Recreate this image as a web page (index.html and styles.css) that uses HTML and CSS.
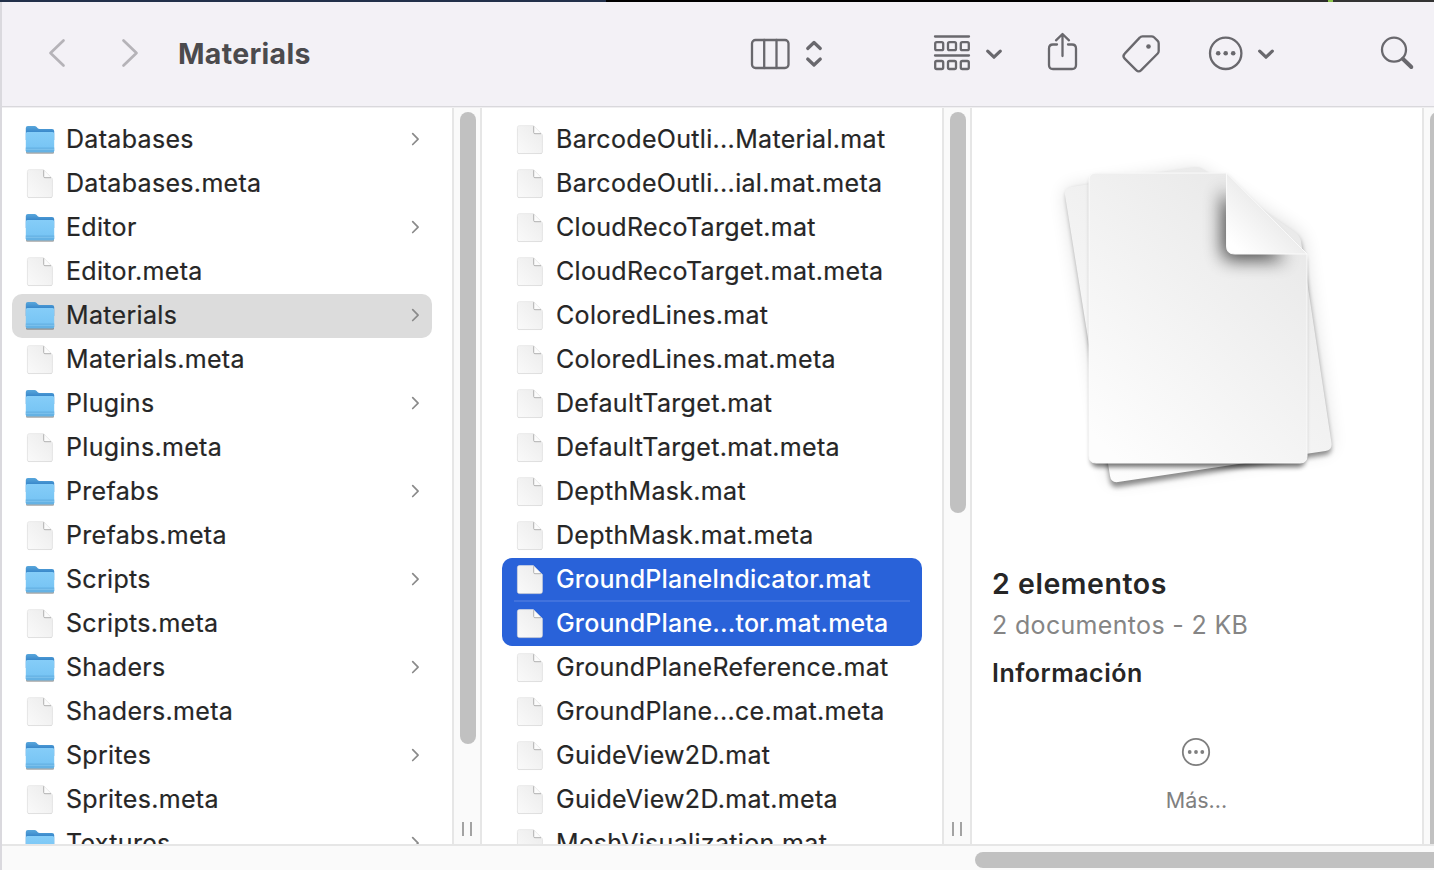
FILE: index.html
```html
<!DOCTYPE html>
<html lang="es">
<head>
<meta charset="utf-8">
<title>Materials</title>
<link rel="stylesheet" href="styles.css">
</head>
<body>
<svg class="defs" width="0" height="0">
  <defs>
    <linearGradient id="gFront" x1="0" y1="0" x2="0" y2="1"><stop offset="0" stop-color="#85cdf8"/><stop offset="1" stop-color="#74c2f3"/></linearGradient>
    <linearGradient id="gBack" x1="0" y1="0" x2="0" y2="1"><stop offset="0" stop-color="#59a7dc"/><stop offset="0.6" stop-color="#2d7cc4"/></linearGradient>
    <linearGradient id="gDoc" x1="1" y1="0" x2="0" y2="1"><stop offset="0" stop-color="#ebebeb"/><stop offset="1" stop-color="#fafafa"/></linearGradient>
    <linearGradient id="gPage" x1="0.8" y1="0.1" x2="0.15" y2="1"><stop offset="0" stop-color="#e9e9e9"/><stop offset="1" stop-color="#fdfdfd"/></linearGradient>
    <linearGradient id="gFold" x1="1" y1="0" x2="0" y2="1"><stop offset="0.45" stop-color="#ebebeb"/><stop offset="0.9" stop-color="#ffffff"/></linearGradient>
    <filter id="soft" x="-20%" y="-20%" width="140%" height="140%"><feGaussianBlur stdDeviation="9"/></filter>
    <filter id="tight" x="-20%" y="-20%" width="140%" height="140%"><feGaussianBlur stdDeviation="2.8"/></filter>
    <filter id="foldBlur" x="-50%" y="-50%" width="200%" height="200%"><feGaussianBlur stdDeviation="9"/></filter>
    <clipPath id="pageClip"><path d="M1096 173H1226L1307 254V456q0 7-7 7H1096q-7 0-7-7V180q0-7 7-7z"/></clipPath>
    <symbol id="folder" viewBox="0 0 32 44">
      <path d="M2 33.500h28v1.200q0 1-1.200 1H3.200q-1.200 0-1.200-1z" fill="#000" opacity=".35"/>
      <path d="M1.800 10q0-2 2-2h6.700q1.200 0 2.200 1l1 1.200q.8.800 2 .8H28q2.200 0 2.200 2v9H1.800z" fill="url(#gBack)"/>
      <path d="M1.800 15.500q0-1.500 1.500-1.500h25.400q1.500 0 1.500 1.500v17.200q0 1.500-1.500 1.500H3.300Q1.800 34.200 1.800 32.700z" fill="url(#gFront)"/>
      <path d="M1.800 29.500h28.400v3.200q0 1.500-1.500 1.500H3.300Q1.800 34.200 1.800 32.700z" fill="#65b2e4"/>
      <path d="M2 31.300h28" stroke="#80c4ee" stroke-width="1"/>
    </symbol>
    <symbol id="doc" viewBox="0 0 32 44">
      <path d="M5.400 9.200h14.500l8.500 8.500v16.300q0 2-2 2H5.400q-2 0-2-2V11.200q0-2 2-2z" fill="#000" opacity=".24"/>
      <path d="M5.400 7.600h14l9 9v17q0 2-2 2h-21q-2 0-2-2v-24q0-2 2-2z" fill="url(#gDoc)" stroke="#e2e2e2" stroke-width=".6"/>
      <path d="M19.700 8.200v6.300q0 1.200 1.200 1.200H27" fill="#fcfcfc" stroke="#b0b0b0" stroke-width="1"/>
    </symbol>
    <symbol id="arrow" viewBox="0 0 10 44">
      <path d="M2.700 15.700l5.400 5.400-5.400 5.400" fill="none" stroke="#8a8a8a" stroke-width="1.700" stroke-linecap="round" stroke-linejoin="round"/>
    </symbol>
  </defs>
</svg>
<div class="desktop"></div>
<main class="window">
  <header class="toolbar">
    <svg class="tool back" viewBox="47 2 20 104"><path d="M63.500 40.500L50.500 53l13 12.500"/></svg>
    <svg class="tool forward" viewBox="120 2 20 104"><path d="M123.500 40.500L136.500 53l-13 12.500"/></svg>
    <h1 class="title">Materials</h1>
    <svg class="tool view" viewBox="750 2 76 104"><rect x="752" y="40" width="36.500" height="28" rx="3.500"/><path d="M764.200 40v28M776.500 40v28"/><path class="bold" d="M807.700 48.500l6.300-6 6.300 6M807.700 59l6.300 6 6.300-6"/></svg>
    <svg class="tool group" viewBox="932 2 72 104"><path d="M935 36.500h34M935 55.500h34"/><rect x="935.200" y="42.200" width="8" height="8" rx="1.500"/><rect x="948" y="42.200" width="8" height="8" rx="1.500"/><rect x="960.800" y="42.200" width="8" height="8" rx="1.500"/><rect x="935.200" y="61" width="8" height="8" rx="1.500"/><rect x="948" y="61" width="8" height="8" rx="1.500"/><rect x="960.800" y="61" width="8" height="8" rx="1.500"/><path class="bold" d="M987.700 51.200l6.300 6 6.300-6"/></svg>
    <svg class="tool share" viewBox="1046 2 34 104"><path d="M1057 44.500h-4q-4 0-4 4v16.500q0 4 4 4h19q4 0 4-4V48.500q0-4-4-4h-4M1062.500 56V34.500M1056 40.300l6.500-6.300 6.500 6.300"/></svg>
    <svg class="tool tag" viewBox="1120 2 42 104"><path d="M1142.500 36.300h9q1.500 0 2.500 1l3.700 3.600q1 1 1 2.500V51q0 1.500-1 2.500l-16.500 16.600q-2.500 2.500-5 0l-11.500-11.500q-2.500-2.500 0-5l15-16q1-1.300 2.800-1.300z"/><circle class="fill" cx="1148.500" cy="46.500" r="2.300"/></svg>
    <svg class="tool more" viewBox="1207 2 70 104"><circle cx="1225.700" cy="53.300" r="15.700"/><circle class="fill" cx="1218.200" cy="53.300" r="2.300"/><circle class="fill" cx="1225.700" cy="53.300" r="2.300"/><circle class="fill" cx="1233.200" cy="53.300" r="2.300"/><path class="bold" d="M1259.700 51.200l6.300 6 6.300-6"/></svg>
    <svg class="tool search" viewBox="1379 2 36 104"><circle cx="1394" cy="49.700" r="12"/><path class="handle" d="M1403 59l8.300 8"/></svg>
  </header>
  <section class="browser">
    <ul class="column">
      <li class="row"><svg class="icon"><use href="#folder"/></svg><span class="name">Databases</span><svg class="arrow"><use href="#arrow"/></svg></li>
      <li class="row"><svg class="icon"><use href="#doc"/></svg><span class="name">Databases.meta</span></li>
      <li class="row"><svg class="icon"><use href="#folder"/></svg><span class="name">Editor</span><svg class="arrow"><use href="#arrow"/></svg></li>
      <li class="row"><svg class="icon"><use href="#doc"/></svg><span class="name">Editor.meta</span></li>
      <li class="row current"><svg class="icon"><use href="#folder"/></svg><span class="name">Materials</span><svg class="arrow"><use href="#arrow"/></svg></li>
      <li class="row"><svg class="icon"><use href="#doc"/></svg><span class="name">Materials.meta</span></li>
      <li class="row"><svg class="icon"><use href="#folder"/></svg><span class="name">Plugins</span><svg class="arrow"><use href="#arrow"/></svg></li>
      <li class="row"><svg class="icon"><use href="#doc"/></svg><span class="name">Plugins.meta</span></li>
      <li class="row"><svg class="icon"><use href="#folder"/></svg><span class="name">Prefabs</span><svg class="arrow"><use href="#arrow"/></svg></li>
      <li class="row"><svg class="icon"><use href="#doc"/></svg><span class="name">Prefabs.meta</span></li>
      <li class="row"><svg class="icon"><use href="#folder"/></svg><span class="name">Scripts</span><svg class="arrow"><use href="#arrow"/></svg></li>
      <li class="row"><svg class="icon"><use href="#doc"/></svg><span class="name">Scripts.meta</span></li>
      <li class="row"><svg class="icon"><use href="#folder"/></svg><span class="name">Shaders</span><svg class="arrow"><use href="#arrow"/></svg></li>
      <li class="row"><svg class="icon"><use href="#doc"/></svg><span class="name">Shaders.meta</span></li>
      <li class="row"><svg class="icon"><use href="#folder"/></svg><span class="name">Sprites</span><svg class="arrow"><use href="#arrow"/></svg></li>
      <li class="row"><svg class="icon"><use href="#doc"/></svg><span class="name">Sprites.meta</span></li>
      <li class="row"><svg class="icon"><use href="#folder"/></svg><span class="name">Textures</span><svg class="arrow"><use href="#arrow"/></svg></li>
    </ul>
    <div class="track"><div class="thumb long"></div><div class="grip"></div></div>
    <ul class="column second">
      <li class="row"><svg class="icon"><use href="#doc"/></svg><span class="name">BarcodeOutli...Material.mat</span></li>
      <li class="row"><svg class="icon"><use href="#doc"/></svg><span class="name">BarcodeOutli...ial.mat.meta</span></li>
      <li class="row"><svg class="icon"><use href="#doc"/></svg><span class="name">CloudRecoTarget.mat</span></li>
      <li class="row"><svg class="icon"><use href="#doc"/></svg><span class="name">CloudRecoTarget.mat.meta</span></li>
      <li class="row"><svg class="icon"><use href="#doc"/></svg><span class="name">ColoredLines.mat</span></li>
      <li class="row"><svg class="icon"><use href="#doc"/></svg><span class="name">ColoredLines.mat.meta</span></li>
      <li class="row"><svg class="icon"><use href="#doc"/></svg><span class="name">DefaultTarget.mat</span></li>
      <li class="row"><svg class="icon"><use href="#doc"/></svg><span class="name">DefaultTarget.mat.meta</span></li>
      <li class="row"><svg class="icon"><use href="#doc"/></svg><span class="name">DepthMask.mat</span></li>
      <li class="row"><svg class="icon"><use href="#doc"/></svg><span class="name">DepthMask.mat.meta</span></li>
      <li class="row selected first"><svg class="icon"><use href="#doc"/></svg><span class="name">GroundPlaneIndicator.mat</span></li>
      <li class="row selected last"><svg class="icon"><use href="#doc"/></svg><span class="name">GroundPlane...tor.mat.meta</span></li>
      <li class="row"><svg class="icon"><use href="#doc"/></svg><span class="name">GroundPlaneReference.mat</span></li>
      <li class="row"><svg class="icon"><use href="#doc"/></svg><span class="name">GroundPlane...ce.mat.meta</span></li>
      <li class="row"><svg class="icon"><use href="#doc"/></svg><span class="name">GuideView2D.mat</span></li>
      <li class="row"><svg class="icon"><use href="#doc"/></svg><span class="name">GuideView2D.mat.meta</span></li>
      <li class="row"><svg class="icon"><use href="#doc"/></svg><span class="name">MeshVisualization.mat</span></li>
    </ul>
    <div class="track"><div class="thumb short"></div><div class="grip"></div></div>
    <aside class="preview">
      <svg class="pages" viewBox="1032 130 340 390">
        <path d="M1071 188L1194 169q5-1 9 3L1297 232q5 4 6 9L1331 443q1 7-6 8L1118 482q-7 1-8-6L1065 196q-1-7 6-8z" fill="#000" opacity=".13" filter="url(#soft)"/>
        <path d="M1073 190L1194 171q5-1 9 3L1295 236q5 4 6 9L1331 447q1 7-6 8L1118 487q-7 1-8-6L1067 198q-1-7 6-8z" fill="#000" opacity=".42" filter="url(#tight)"/>
        <path d="M1071 187L1194 167.300q6-1 11 3L1295 232q5 4 6 9L1331.500 443q1 7-6 8L1118 482q-7 1-8-6L1065 195q-1-7 6-8z" fill="url(#gPage)"/>
        <path d="M1096 177H1226L1305 258V460q0 7-7 7H1098q-7 0-7-7V184q0-7 7-7z" fill="#000" opacity=".55" filter="url(#tight)"/>
        <path d="M1096 173H1226L1307 254V456q0 7-7 7H1096q-7 0-7-7V180q0-7 7-7z" fill="url(#gPage)" stroke="#fbfbfb" stroke-width="1"/>
        <g clip-path="url(#pageClip)"><path d="M1222 190V250q0 10 10 10h54z" fill="#000" opacity=".68" filter="url(#foldBlur)"/></g>
        <path d="M1226.500 173V246q0 8 8 8H1307z" fill="url(#gFold)" stroke="#fafafa" stroke-width="1"/>
      </svg>
      <h2 class="count">2 elementos</h2>
      <p class="size">2 documentos - 2 KB</p>
      <h3 class="info">Información</h3>
      <div class="action">
        <svg class="dots" viewBox="0 0 30 30"><circle cx="15" cy="15" r="13.200" fill="none" stroke="#7f7f7f" stroke-width="1.800"/><circle cx="8.700" cy="15" r="1.900"/><circle cx="15" cy="15" r="1.900"/><circle cx="21.300" cy="15" r="1.900"/></svg>
        <span class="label">Más...</span>
      </div>
    </aside>
    <div class="track edge"><div class="thumb full"></div></div>
  </section>
  <footer class="scroller"><div class="bar"></div></footer>
</main>
</body>
</html>
```

FILE: styles.css
```css
* { box-sizing: border-box; }
body { margin: 0; width: 1434px; height: 870px; overflow: hidden; font-family: Inter, "Liberation Sans", sans-serif; color: #262626; background: #fff; }
.defs { position: absolute; }
.desktop { height: 2px; background: linear-gradient(90deg, #22304a 0 606px, #000 606px 1190px, #2c2c2c 1190px 1328px, #8bc34a 1328px 1333px, #333 1333px); }
.window { height: 868px; border-left: 2px solid #dad9de; display: flex; flex-direction: column; }
.toolbar { height: 106px; flex: none; background: linear-gradient(#d9d8dc, #d9d8dc) 0 104px / 100% 1px no-repeat #f3f1f6; border-bottom: 1px solid #f0eff1; display: flex; }
.tool { height: 104px; flex: none; fill: none; stroke: #69686d; stroke-width: 2.3; stroke-linecap: round; stroke-linejoin: round; }
.tool .bold { stroke-width: 3.2; }
.tool .handle { stroke-width: 4; }
.tool .fill { fill: #69686d; stroke: none; }
.back { width: 20px; margin-left: 45px; stroke: #b5b3b8; stroke-width: 2.7; }
.forward { width: 20px; margin-left: 53px; stroke: #b5b3b8; stroke-width: 2.7; }
.title { width: 572px; margin: 0 0 0 38px; font-size: 28.5px; font-weight: 700; line-height: 103px; letter-spacing: 0.3px; color: #4b4a4d; }
.view { width: 76px; }
.group { width: 72px; margin-left: 106px; }
.share { width: 34px; margin-left: 42px; }
.tag { width: 42px; margin-left: 40px; }
.more { width: 70px; margin-left: 45px; }
.search { width: 36px; margin-left: 102px; }
.browser { height: 736px; flex: none; display: flex; overflow: hidden; }
.column { width: 450px; flex: none; margin: 0; padding: 10px 20px 0 10px; list-style: none; }
.second { width: 460px; padding-left: 20px; }
.row { height: 44px; padding: 0 12px; display: flex; border-radius: 10px; }
.icon { width: 32px; height: 44px; flex: none; }
.name { flex: 1; padding-left: 10px; font-size: 25px; font-weight: 400; line-height: 43px; letter-spacing: 0.32px; -webkit-text-stroke: 0.2px currentColor; white-space: nowrap; }
.arrow { width: 10px; height: 44px; flex: none; }
.current { background: #dcdcdc; }
.selected { background: #2962d9; color: #fff; }
.selected .name { font-weight: 500; letter-spacing: 0.14px; -webkit-text-stroke: 0; }
.first { border-radius: 10px 10px 0 0; background: linear-gradient(#4172dd, #4172dd) 12px 42px / 396px 2px no-repeat #2962d9; }
.last { border-radius: 0 0 10px 10px; }
.track { width: 30px; flex: none; padding: 4px 4px 8px 6px; display: flex; flex-direction: column; justify-content: space-between; background: #fafafa; border: solid #e6e6e6; border-width: 0 2px; }
.thumb { width: 16px; border-radius: 8px; background: #c1c1c1; }
.long { height: 632px; }
.short { height: 401px; }
.grip { width: 10px; height: 14px; margin-left: 2px; border: solid #a3a3a3; border-width: 0 2px; }
.edge { width: 12px; border-right: 0; padding: 4px 0 0 6px; overflow: hidden; }
.full { height: 760px; flex: none; }
.preview { width: 450px; flex: none; padding: 22px 20px 0; display: flex; flex-direction: column; }
.pages { width: 340px; height: 390px; margin-left: 40px; flex: none; }
.count { margin: 44px 0 0; font-size: 28.5px; line-height: 40px; font-weight: 600; letter-spacing: 0.55px; }
.size { margin: 5px 0 0; font-size: 25px; line-height: 32px; letter-spacing: 0.33px; color: #858585; }
.info { margin: 16px 0 0; font-size: 25px; line-height: 32px; font-weight: 600; letter-spacing: 0.5px; }
.action { margin: 48px 0 0 -2px; display: flex; flex-direction: column; align-items: center; }
.dots { width: 30px; height: 30px; fill: #7f7f7f; }
.label { margin: 19px 0 0 1px; font-size: 21.5px; line-height: 28px; color: #808080; }
.scroller { height: 26px; flex: none; padding: 6px 0 0 973px; background: #fafafa; border-top: 2px solid #e6e6e6; }
.bar { height: 16px; border-radius: 8px 0 0 8px; background: #c1c1c1; }
```
